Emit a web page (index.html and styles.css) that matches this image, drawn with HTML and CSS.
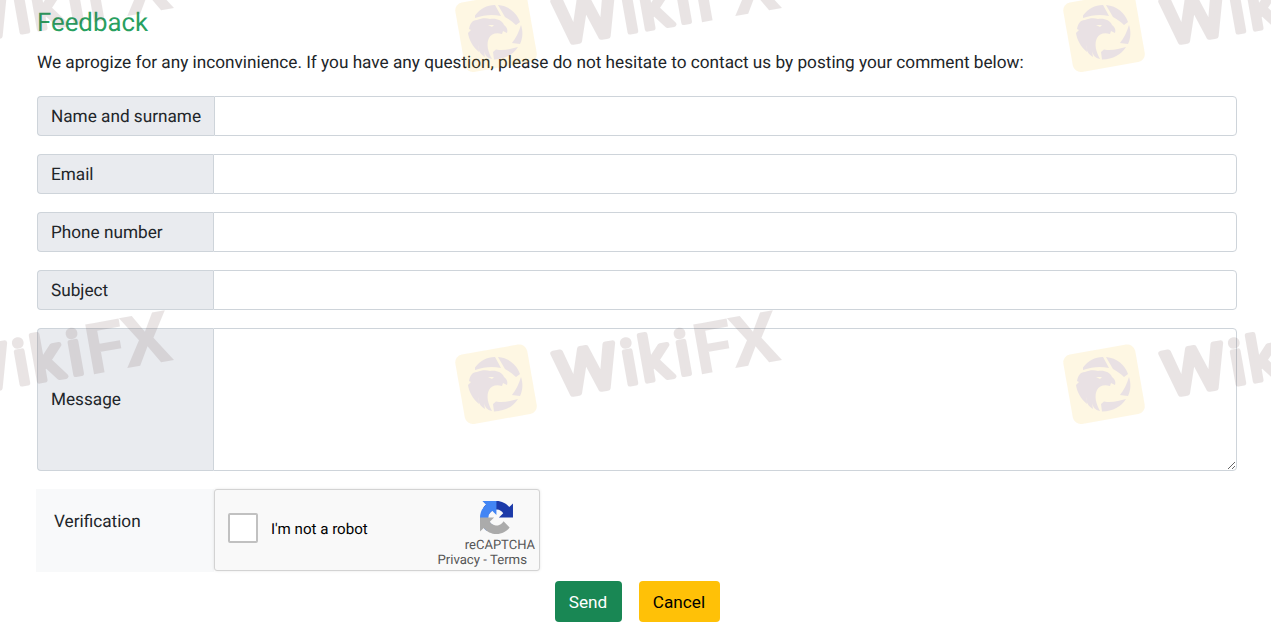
FILE: index.html
```html
<!DOCTYPE html>
<html lang="en">
<head>
<meta charset="utf-8">
<title>Feedback</title>
<link rel="stylesheet" href="styles.css">
</head>
<body>
<main class="page">
  <h1 class="title">Feedback</h1>
  <p class="intro">We aprogize for any inconvinience. If you have any question, please do not hesitate to contact us by posting your comment below:</p>
  <form class="form">
    <div class="group"><label class="label label-wide" for="name">Name and surname</label><input class="control" id="name" type="text"></div>
    <div class="group"><label class="label" for="email">Email</label><input class="control" id="email" type="text"></div>
    <div class="group"><label class="label" for="phone">Phone number</label><input class="control" id="phone" type="text"></div>
    <div class="group"><label class="label" for="subject">Subject</label><input class="control" id="subject" type="text"></div>
    <div class="group group-tall"><label class="label" for="message">Message</label><textarea class="control" id="message"></textarea></div>
    <div class="verify">
      <div class="verify-label">Verification</div>
      <div class="captcha">
        <span class="check"></span>
        <span class="robot">I'm not a robot</span>
        <div class="brand">
          <svg class="brand-icon" viewBox="0 0 64 64">
            <path fill="#1c3aa9" d="M64 31.955l-.033-1.37V4.687l-7.16 7.16C50.948 4.674 42.033.093 32.05.093c-10.4 0-19.622 4.96-25.458 12.64l11.736 11.86a15.55 15.55 0 0 1 4.754-5.334c2.05-1.6 4.952-2.906 8.968-2.906.485 0 .86.057 1.135.163 4.976.393 9.288 3.14 11.828 7.124l-8.307 8.307L64 31.953"/>
            <path fill="#4285f4" d="M31.862.094l-1.37.033H4.594l7.16 7.16C4.58 13.147 0 22.06 0 32.046c0 10.4 4.96 19.622 12.64 25.458L24.5 45.768a15.55 15.55 0 0 1-5.334-4.754c-1.6-2.05-2.906-4.952-2.906-8.968 0-.485.057-.86.163-1.135.393-4.976 3.14-9.288 7.124-11.828l8.307 8.307L31.86.095"/>
            <path fill="#ababab" d="M.001 32.045l.033 1.37v25.898l7.16-7.16c5.86 7.173 14.774 11.754 24.76 11.754 10.4 0 19.622-4.96 25.458-12.64l-11.736-11.86a15.55 15.55 0 0 1-4.754 5.334c-2.05 1.6-4.952 2.906-8.968 2.906-.485 0-.86-.057-1.135-.163-4.976-.393-9.288-3.14-11.828-7.124l8.307-8.307c-10.522.04-22.4.066-27.295-.005"/>
          </svg>
          <span class="brand-name">reCAPTCHA</span>
          <span class="brand-links">Privacy - Terms</span>
        </div>
      </div>
    </div>
    <div class="actions">
      <button class="btn btn-send" type="button">Send</button>
      <button class="btn btn-cancel" type="button">Cancel</button>
    </div>
  </form>
</main>
<svg class="watermark" viewBox="0 0 1271 626" aria-hidden="true">
  <defs>
    <g id="mark">
      <g transform="rotate(-10)">
        <rect class="mark-tile" x="-36.5" y="-35" width="73" height="70.500" rx="8"/>
        <g class="mark-ink">
          <text class="mark-round" y="23.3" x="59.5" textLength="63.5" lengthAdjust="spacingAndGlyphs">W</text>
          <text class="mark-round" y="23.3" x="127.5 145.5 182">iki</text>
          <text class="mark-bold" y="26" x="200" textLength="40" lengthAdjust="spacingAndGlyphs">F</text>
          <text class="mark-bold" y="26" x="237.5" textLength="49" lengthAdjust="spacingAndGlyphs">X</text>
        </g>
      </g>
      <g class="mark-bird">
        <path d="M-21-16.5C-16-23-9-27-1-27L5-16C-4-18-12-17-21-14Z"/>
        <path d="M2-27C13-26 21-19 24-10L20-7C17-10 13-13 9-15Z"/>
        <path d="M25-7C27-1 27 6 24 12L16 11C20 6 23 0 25-7Z"/>
        <path d="M22 15C17 23 9 27-2 27.500L-3 20L0 17.500C8 19 15 17 22 15Z"/>
        <path d="M-27-3C-26-8-24-12-19-12C-14-14-10-14-6-13C0-14 6-12 8-7C11-5 12-2 11 1L7-1L6 2C0 0-5 2-7 6C-10 12-8 20-4 27C-9 26-11 23-12 19L-11 25C-16 22-18 18-18 13L-17 20C-23 15-27 8-28 1L-25-2ZM-8-7L-4-5L-2-7Z" fill-rule="evenodd"/>
      </g>
    </g>
  </defs>
  <use href="#mark" x="-112" y="32"/><use href="#mark" x="496" y="32"/><use href="#mark" x="1104" y="32"/>
  <use href="#mark" x="-112" y="384"/><use href="#mark" x="496" y="384"/><use href="#mark" x="1104" y="384"/>
</svg>
</body>
</html>
```
FILE: styles.css
```css
* { box-sizing: border-box; }
body { margin: 0; background: #fff; color: #212529; font-family: Roboto, sans-serif; font-size: 17.2px; text-rendering: geometricPrecision; overflow: hidden; }
.page { width: 1271px; height: 626px; padding: 7px 34px 0 37px; }
.title { margin: 0; font-size: 25.8px; line-height: 32px; font-weight: 400; color: #28a060; }
.intro { margin: 11px 0 20px; line-height: 26px; white-space: nowrap; }
.form { display: flex; flex-direction: column; gap: 18px; }
.group { display: flex; height: 40px; }
.group-tall { height: 143px; }
.label { width: 176px; flex: none; display: flex; align-items: center; padding: 1px 0 0 13px; background: #e9ebef; border: 1px solid #ced4da; border-right: 0; border-radius: 4px 0 0 4px; white-space: nowrap; }
.label-wide { width: 177px; }
.control { flex: 1; min-width: 0; margin: 0; background: #fff; border: 1px solid #ced4da; border-radius: 0 4px 4px 0; font: inherit; outline: 0; resize: vertical; }
.verify { display: flex; height: 83px; margin-left: -1px; }
.verify-label { width: 178px; padding: 20px 0 0 18px; line-height: 26px; background: #f8f9fa; }
.captcha { display: flex; align-items: center; width: 326px; height: 82px; padding-left: 13px; background: #f9f9f9; border: 1px solid #d3d3d3; border-radius: 3px; box-shadow: 0 0 3px rgba(0, 0, 0, .1); color: #000; }
.check { width: 30px; height: 30px; margin-top: -4px; background: #fff; border: 2px solid #c1c1c1; border-radius: 2px; }
.robot { margin: -2px 0 0 13px; font-size: 15.1px; }
.brand { display: flex; flex-direction: column; align-items: flex-end; flex: 1; height: 80px; padding: 11px 4px 0 0; color: #555; font-size: 13px; }
.brand-icon { width: 33px; height: 33px; margin-right: 22px; }
.brand-name { line-height: 15px; margin-top: 4px; }
.brand-links { line-height: 15px; margin-right: 8px; font-size: 13.2px; }
.actions { display: flex; justify-content: center; gap: 17px; margin-top: -9px; }
.btn { height: 41px; border: 0; border-radius: 4px; padding: 0; font: inherit; }
.btn-send { width: 67px; background: #198754; color: #fff; }
.btn-cancel { width: 81px; background: #ffc107; color: #000; }
.watermark { position: absolute; left: 0; top: 0; width: 1271px; height: 626px; pointer-events: none; }
.mark-tile { fill: #f5b800; opacity: .11; }
.mark-ink { fill: #5a3a3a; stroke: #5a3a3a; stroke-width: 0; opacity: .13; }
.mark-bird { fill: #3a28f0; opacity: .1; }
.mark-round { font: 400 61.5px Roboto, sans-serif; stroke-width: 5.2px; stroke-linejoin: round; }
.mark-bold { font: 700 71px Roboto, sans-serif; }
```
